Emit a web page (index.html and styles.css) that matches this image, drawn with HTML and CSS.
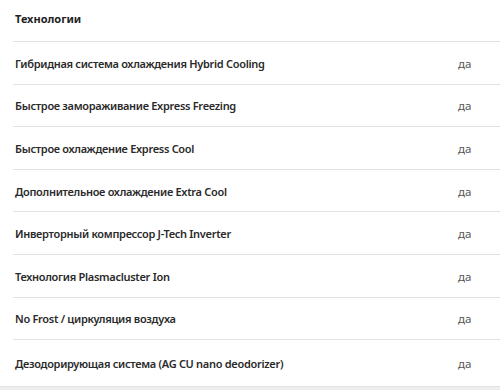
FILE: index.html
```html
<!DOCTYPE html>
<html lang="ru">
<head>
<meta charset="utf-8">
<link rel="stylesheet" href="styles.css">
</head>
<body>
<div class="specs">
  <div class="specs-head">Технологии</div>
  <div class="row"><span class="name">Гибридная система охлаждения Hybrid Cooling</span><span class="val">да</span></div>
  <div class="row"><span class="name">Быстрое замораживание Express Freezing</span><span class="val">да</span></div>
  <div class="row"><span class="name">Быстрое охлаждение Express Cool</span><span class="val">да</span></div>
  <div class="row"><span class="name">Дополнительное охлаждение Extra Cool</span><span class="val">да</span></div>
  <div class="row"><span class="name">Инверторный компрессор J-Tech Inverter</span><span class="val">да</span></div>
  <div class="row"><span class="name">Технология Plasmacluster Ion</span><span class="val">да</span></div>
  <div class="row"><span class="name">No Frost / циркуляция воздуха</span><span class="val">да</span></div>
  <div class="row last"><span class="name">Дезодорирующая система (AG CU nano deodorizer)</span><span class="val">да</span></div>
</div>
<div class="bottom-band"></div>
</body>
</html>
```
FILE: styles.css
```css
html, body {
  margin: 0;
  padding: 0;
  background: #fff;
}
body {
  font-family: "Noto Sans", "Open Sans", sans-serif;
  color: #333;
  width: 500px;
  height: 391px;
  overflow: hidden;
}
.specs {
  margin-left: 13px;
}
.specs-head {
  height: 36px;
  padding-bottom: 5px;
  display: flex;
  align-items: center;
  padding-left: 2px;
  font-size: 11px;
  font-weight: 700;
  color: #222;
  border-bottom: 1px solid #e2e2e2;
}
.row {
  display: flex;
  align-items: center;
  padding-left: 2px;
  padding-top: 1px;
  box-sizing: border-box;
  border-bottom: 1px solid #e2e2e2;
  font-size: 11px;
}
.row:not(.last) {
  height: 42.6px;
}
.row.last {
  border-bottom: none;
  height: 46px;
}
.name {
  flex: 1;
  font-weight: 600;
  letter-spacing: -0.3px;
  color: #2a2a2a;
}
.val {
  width: 42px;
  color: #555;
  font-size: 11.5px;
  font-weight: 400;
}
.bottom-band {
  height: 3px;
  background: #eeeeee;
  border-top: 1px solid #e2e2e2;
}
```
